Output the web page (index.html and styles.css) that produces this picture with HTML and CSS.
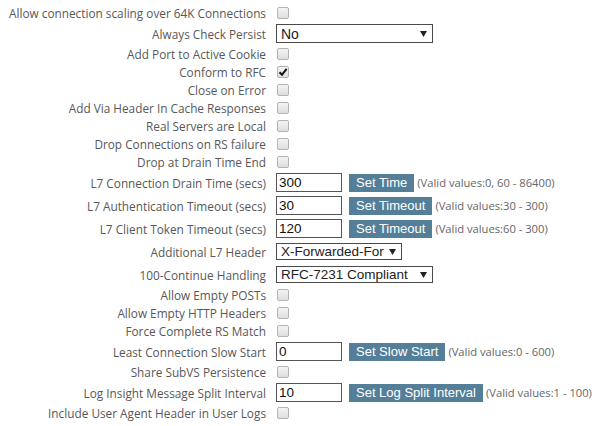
FILE: index.html
```html
<!DOCTYPE html>
<html>
<head>
<meta charset="utf-8">
<link rel="stylesheet" href="styles.css">
</head>
<body>
<div class="form">
  <div class="row cbrow"><span class="lbl">Allow connection scaling over 64K Connections</span><span class="cb"></span></div>
  <div class="row selrow"><span class="lbl">Always Check Persist</span><span class="sel sel-wide sel-tall"><span class="seltext">No</span><svg class="arrow" width="7" height="6" viewBox="0 0 7 6"><path d="M0 0H7L3.5 6Z" fill="#222"/></svg></span></div>
  <div class="row cbrow"><span class="lbl">Add Port to Active Cookie</span><span class="cb"></span></div>
  <div class="row cbrow"><span class="lbl">Conform to RFC</span><span class="cb"><svg width="10" height="10" viewBox="0 0 10 10"><path d="M1.5 5.2L4 7.8L8.6 1.8" fill="none" stroke="#111" stroke-width="2"/></svg></span></div>
  <div class="row cbrow"><span class="lbl">Close on Error</span><span class="cb"></span></div>
  <div class="row cbrow"><span class="lbl">Add Via Header In Cache Responses</span><span class="cb"></span></div>
  <div class="row cbrow"><span class="lbl">Real Servers are Local</span><span class="cb"></span></div>
  <div class="row cbrow"><span class="lbl">Drop Connections on RS failure</span><span class="cb"></span></div>
  <div class="row cbrow"><span class="lbl">Drop at Drain Time End</span><span class="cb"></span></div>
  <div class="row inrow"><span class="lbl">L7 Connection Drain Time (secs)</span><span class="inp">300</span><span class="btn">Set Time</span><span class="hint">(Valid values:0, 60 - 86400)</span></div>
  <div class="row inrow"><span class="lbl">L7 Authentication Timeout (secs)</span><span class="inp">30</span><span class="btn">Set Timeout</span><span class="hint">(Valid values:30 - 300)</span></div>
  <div class="row inrow"><span class="lbl">L7 Client Token Timeout (secs)</span><span class="inp">120</span><span class="btn">Set Timeout</span><span class="hint">(Valid values:60 - 300)</span></div>
  <div class="row selrow"><span class="lbl">Additional L7 Header</span><span class="sel sel-mid"><span class="seltext">X-Forwarded-For</span><svg class="arrow" width="7" height="6" viewBox="0 0 7 6"><path d="M0 0H7L3.5 6Z" fill="#222"/></svg></span></div>
  <div class="row selrow"><span class="lbl">100-Continue Handling</span><span class="sel sel-wide"><span class="seltext">RFC-7231 Compliant</span><svg class="arrow" width="7" height="6" viewBox="0 0 7 6"><path d="M0 0H7L3.5 6Z" fill="#222"/></svg></span></div>
  <div class="row cbrow"><span class="lbl">Allow Empty POSTs</span><span class="cb"></span></div>
  <div class="row cbrow"><span class="lbl">Allow Empty HTTP Headers</span><span class="cb"></span></div>
  <div class="row cbrow"><span class="lbl">Force Complete RS Match</span><span class="cb"></span></div>
  <div class="row inrow"><span class="lbl">Least Connection Slow Start</span><span class="inp">0</span><span class="btn">Set Slow Start</span><span class="hint">(Valid values:0 - 600)</span></div>
  <div class="row cbrow"><span class="lbl">Share SubVS Persistence</span><span class="cb"></span></div>
  <div class="row inrow"><span class="lbl">Log Insight Message Split Interval</span><span class="inp">10</span><span class="btn">Set Log Split Interval</span><span class="hint">(Valid values:1 - 100)</span></div>
  <div class="row cbrow"><span class="lbl">Include User Agent Header in User Logs</span><span class="cb"></span></div>
</div>
</body>
</html>
```

FILE: styles.css
```css
html, body {
  margin: 0;
  background: #ffffff;
}
body {
  padding: 4px 0 0 0;
  font-family: "Open Sans", "Noto Sans", sans-serif;
  font-size: 11.8px;
  color: #585858;
}
.form {
  display: flex;
  flex-direction: column;
}
.row {
  display: flex;
  align-items: center;
}
.cbrow { height: 18px; }
.inrow { height: 23px; }
.selrow { height: 23px; }
.lbl {
  width: 266px;
  flex-shrink: 0;
  text-align: right;
  margin-right: 10px;
  white-space: nowrap;
}
.cb {
  width: 10px;
  height: 10px;
  margin-left: 1px;
  border: 1px solid #b4b4b4;
  border-radius: 2px;
  background: linear-gradient(#f4f4f4, #dedede);
  display: flex;
  align-items: center;
  justify-content: center;
}
.sel {
  box-sizing: border-box;
  height: 17px;
  border: 1px solid #4a4a4a;
  background: #fff;
  display: flex;
  align-items: center;
  justify-content: space-between;
  padding: 0 5px 0 4px;
  font-family: "Liberation Sans", Arial, sans-serif;
  font-size: 13.5px;
  color: #222;
}
.sel-tall { height: 19px; font-size: 14px; }
.sel-wide { width: 157px; }
.sel-mid { width: 126px; }
.arrow { flex-shrink: 0; }
.inp {
  box-sizing: border-box;
  width: 66px;
  height: 19px;
  border: 1px solid #555;
  background: #fff;
  padding: 0 2px;
  display: flex;
  align-items: center;
  font-family: "Liberation Sans", Arial, sans-serif;
  font-size: 13.5px;
  color: #111;
}
.btn {
  margin-left: 7px;
  height: 18px;
  padding: 0 7px;
  background: #557f98;
  color: #ffffff;
  display: flex;
  align-items: center;
  font-family: "Liberation Sans", Arial, sans-serif;
  font-size: 13px;
}
.hint {
  margin-left: 3px;
  font-size: 11.2px;
  color: #666;
  white-space: nowrap;
}
```
